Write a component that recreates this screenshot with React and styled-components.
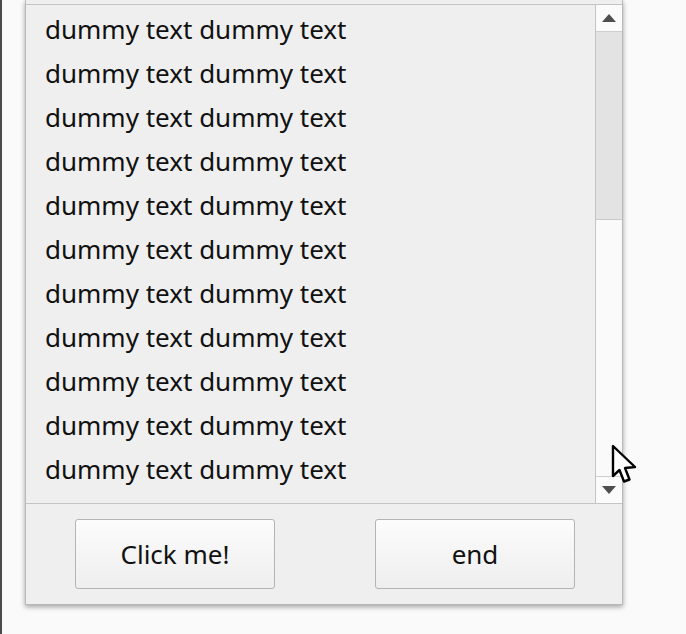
import React from 'react';
import styled, { createGlobalStyle } from 'styled-components';

const GlobalStyle = createGlobalStyle`
  html, body {
    margin: 0;
    padding: 0;
    background: #fafafa;
    overflow: hidden;
  }
  #root {
    height: 634px;
  }
`;

const Desktop = styled.div`
  height: 634px;
  box-sizing: border-box;
  border-left: 2px solid #4a4a4a;
  padding-left: 23px;
  position: relative;
  font-family: 'Noto Sans', 'Open Sans', sans-serif;
`;

const Window = styled.div`
  width: 598px;
  box-sizing: border-box;
  padding-top: 4px;
  background: #efefef;
  border: 1px solid #b8b8b8;
  border-top: none;
  box-shadow: 0 2px 5px rgba(0, 0, 0, 0.35);
  display: flex;
  flex-direction: column;
`;

const ListFrame = styled.div`
  display: flex;
  height: 498px;
  border-top: 1px solid #c4c4c4;
  border-bottom: 1px solid #c4c4c4;
`;

const List = styled.div`
  flex: 1;
  padding: 2px 0 0 19px;
  overflow: hidden;
`;

const Row = styled.div`
  height: 44px;
  line-height: 44px;
  font-size: 26px;
  color: #111111;
  white-space: nowrap;
  letter-spacing: 0;
`;

const Scrollbar = styled.div`
  width: 26px;
  border-left: 1px solid #c4c4c4;
  background: #fafafa;
  display: flex;
  flex-direction: column;
`;

const ArrowButton = styled.div`
  height: 27px;
  display: flex;
  align-items: center;
  justify-content: center;
  background: #fbfbfb;
  border-bottom: ${p => (p.$top ? '1px solid #cfcfcf' : 'none')};
  border-top: ${p => (p.$top ? 'none' : '1px solid #cfcfcf')};
  box-sizing: border-box;
`;

const Track = styled.div`
  flex: 1;
  display: flex;
  flex-direction: column;
`;

const Thumb = styled.div`
  height: 187px;
  background: #e3e3e3;
  border-bottom: 1px solid #cacaca;
`;

const ButtonBar = styled.div`
  height: 100px;
  display: flex;
  gap: 100px;
  align-items: center;
  padding: 0 47px 0 49px;
`;

const PushButton = styled.button`
  width: 200px;
  height: 70px;
  border: 1px solid #b4b4b4;
  border-radius: 3px;
  background: linear-gradient(#fcfcfc, #eeeeee);
  font-family: 'Noto Sans', 'Open Sans', sans-serif;
  font-size: 26px;
  color: #111111;
  padding: 0;
`;

const Cursor = styled.svg`
  position: absolute;
  left: 609px;
  top: 444px;
`;

const Triangle = ({ down }) => (
  <svg width="14" height="8" viewBox="0 0 14 8">
    <polygon points={down ? '0,0 14,0 7,8' : '7,0 14,8 0,8'} fill="#4f4f4f" />
  </svg>
);

const rows = Array.from({ length: 11 }, () => 'dummy text dummy text');

const App = () => {
  return (
    <>
      <GlobalStyle />
      <Desktop>
        <Window>
          <ListFrame>
            <List>
              {rows.map((t, i) => (
                <Row key={i}>{t}</Row>
              ))}
            </List>
            <Scrollbar>
              <ArrowButton $top>
                <Triangle />
              </ArrowButton>
              <Track>
                <Thumb />
              </Track>
              <ArrowButton>
                <Triangle down />
              </ArrowButton>
            </Scrollbar>
          </ListFrame>
          <ButtonBar>
            <PushButton>Click me!</PushButton>
            <PushButton>end</PushButton>
          </ButtonBar>
        </Window>
        <Cursor width="30" height="44" viewBox="0 0 30 44">
          <path
            d="M2 2 L2 32 L8.5 26 L13 37.5 L18.5 35.5 L14 24 L24 23 Z"
            fill="#ffffff"
            stroke="#000000"
            strokeWidth="2.4"
            strokeLinejoin="round"
          />
        </Cursor>
      </Desktop>
    </>
  );
};

export default App;
